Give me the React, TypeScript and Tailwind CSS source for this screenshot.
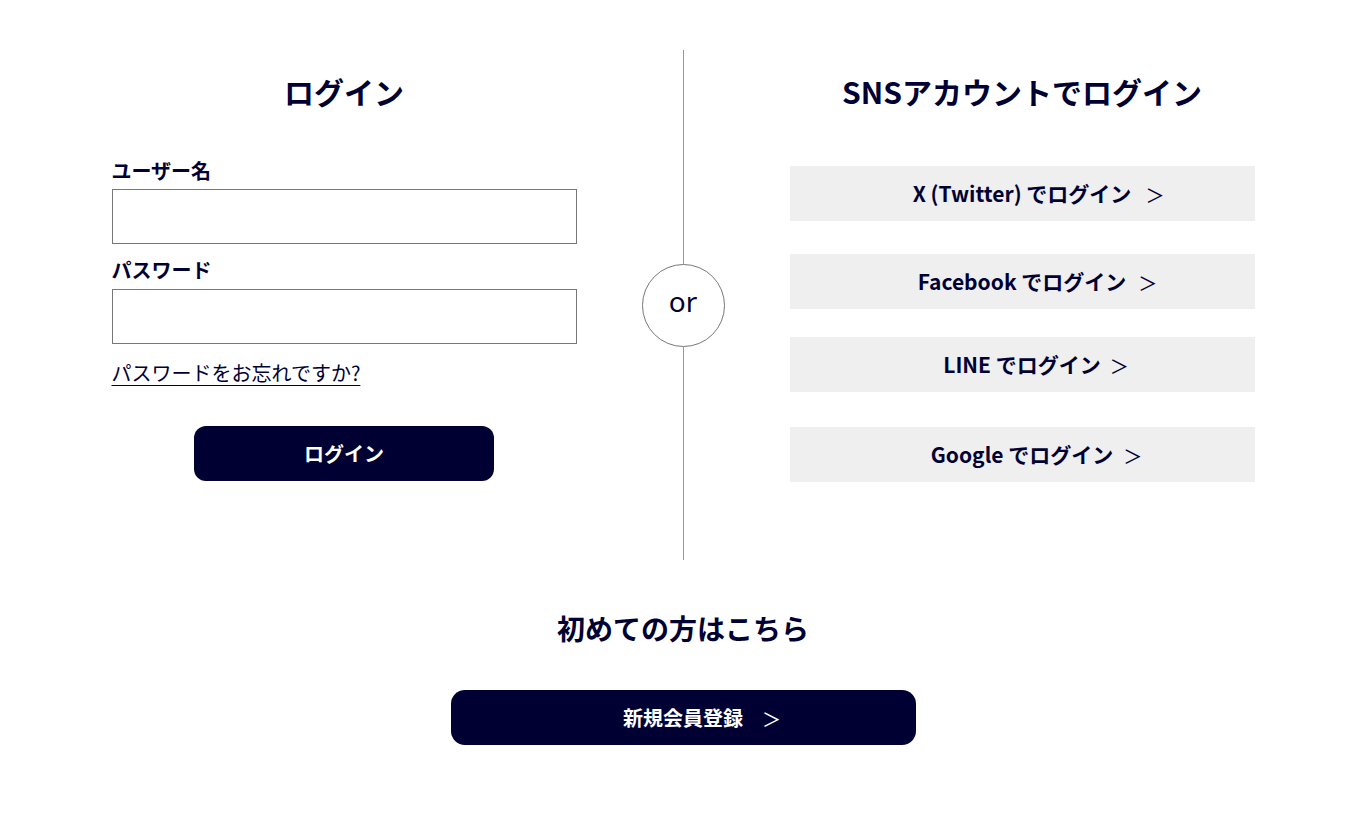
const font = { fontFamily: '"Noto Sans CJK JP", "Noto Sans", sans-serif' };

function Label({ children, className = '' }: { children: React.ReactNode; className?: string }) {
  return <div className={`text-[20px] leading-[28px] font-bold ${className}`}>{children}</div>;
}

// label is centred on its own; the arrow hangs after it
function Arrow({ gap }: { gap: string }) {
  return (
    <span className={`absolute left-full top-1/2 -translate-y-1/2 font-normal text-[19px] leading-none ${gap}`}>＞</span>
  );
}

function SnsButton({ label, className = '', gap = 'ml-3' }: { label: string; className?: string; gap?: string }) {
  return (
    <button
      className={`w-full h-[55px] bg-[#efefef] flex items-center justify-center text-[21px] font-bold text-[#000033] ${className}`}
    >
      <span className="relative">
        {label}
        <Arrow gap={gap} />
      </span>
    </button>
  );
}

export default function App() {
  return (
    <div className="min-h-screen bg-white text-[#000033]" style={font}>
      <div className="flex justify-center pt-[50px]">
        {/* left: id / password */}
        <div className="w-[465px] flex flex-col">
          <h1 className="mt-[21px] text-[30px] leading-[40px] font-bold text-center">ログイン</h1>
          <Label className="mt-[46px]">ユーザー名</Label>
          <input className="mt-[4px] h-[55px] w-full border border-[#777777] outline-none px-3 text-[18px]" />
          <Label className="mt-[12px]">パスワード</Label>
          <input type="password" className="mt-[5px] h-[55px] w-full border border-[#777777] outline-none px-3 text-[18px]" />
          <a
            href="#"
            className="mt-[15px] self-start text-[20px] leading-[28px] underline underline-offset-[4px] decoration-1"
          >
            パスワードをお忘れですか?
          </a>
          <button className="mt-[39px] self-center w-[300px] h-[55px] rounded-[12px] bg-[#000033] text-white text-[20px] font-bold">
            ログイン
          </button>
        </div>

        {/* divider */}
        <div className="w-[213px] flex flex-col items-center">
          <div className="w-px h-[214px] bg-[#999999]" />
          <div className="w-[83px] h-[83px] rounded-full border border-[#777777] flex items-center justify-center">
            <span className="text-[28px] leading-none pb-[10px]" style={{ fontFamily: '"Noto Sans", sans-serif' }}>or</span>
          </div>
          <div className="w-px h-[213px] bg-[#999999]" />
        </div>

        {/* right: sns */}
        <div className="w-[465px] flex flex-col">
          <h1 className="mt-[21px] text-[30px] leading-[40px] font-bold text-center">SNSアカウントでログイン</h1>
          <SnsButton label="X (Twitter) でログイン" className="mt-[55px]" gap="ml-[14px]" />
          <SnsButton label="Facebook でログイン" className="mt-[33px]" gap="ml-[12px]" />
          <SnsButton label="LINE でログイン" className="mt-[28px]" gap="ml-[9px]" />
          <SnsButton label="Google でログイン" className="mt-[35px]" gap="ml-[10px]" />
        </div>
      </div>

      {/* register */}
      <div className="flex flex-col items-center">
        <h2 className="mt-[48px] text-[28px] leading-[40px] font-bold">初めての方はこちら</h2>
        <button className="mt-[42px] w-[465px] h-[55px] rounded-[14px] bg-[#000033] text-white flex items-center justify-center">
          <span className="relative text-[20px] font-bold">
            新規会員登録
            <Arrow gap="ml-[19px]" />
          </span>
        </button>
      </div>
    </div>
  );
}
